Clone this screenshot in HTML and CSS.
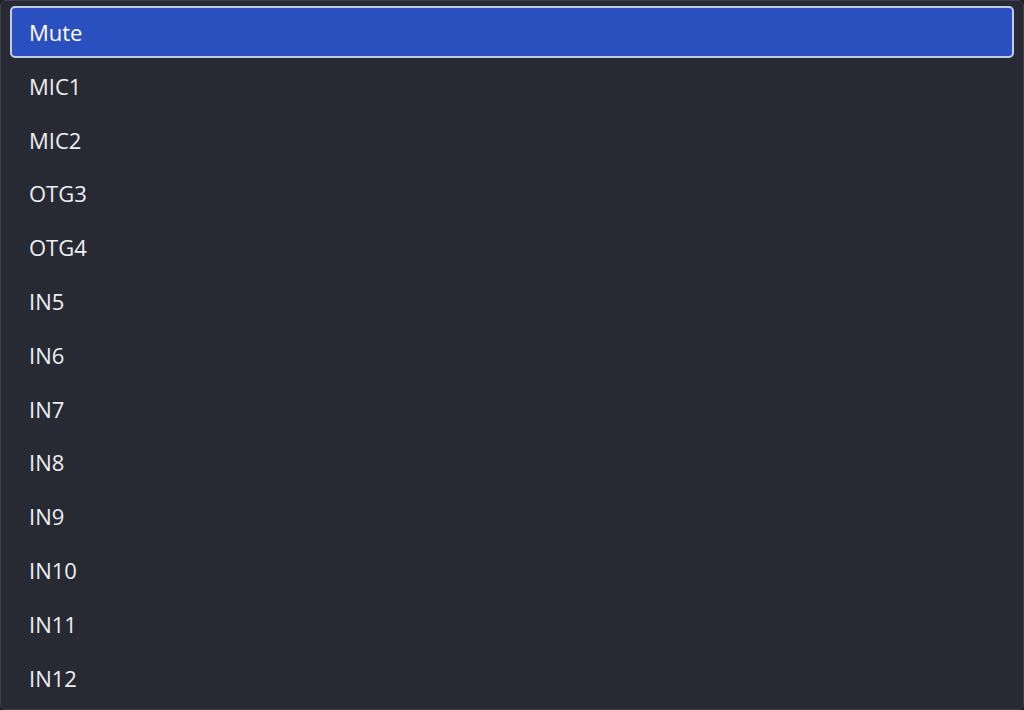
FILE: index.html
```html
<!DOCTYPE html>
<html lang="en">
<head>
  <meta charset="UTF-8" />
  <meta name="viewport" content="width=device-width, initial-scale=1.0"/>
  <title>Input select</title>
  <link rel="stylesheet" href="styles.css">
</head>
<body>
  <div class="dropdown">
    <ul class="option-list">
      <li class="option selected">Mute</li>
      <li class="option">MIC1</li>
      <li class="option">MIC2</li>
      <li class="option">OTG3</li>
      <li class="option">OTG4</li>
      <li class="option">IN5</li>
      <li class="option">IN6</li>
      <li class="option">IN7</li>
      <li class="option">IN8</li>
      <li class="option">IN9</li>
      <li class="option">IN10</li>
      <li class="option">IN11</li>
      <li class="option">IN12</li>
    </ul>
  </div>
</body>
</html>
```

FILE: styles.css
```css
html, body {
  margin: 0;
  height: 100%;
  background: #1c1e24;
  overflow: hidden;
}
body {
  font-family: "Open Sans", "Noto Sans", sans-serif;
}
.dropdown {
  box-sizing: border-box;
  height: 710px;
  background: #272a33;
  border: 1px solid #3d4049;
  border-radius: 6px;
  overflow: hidden;
}
.option-list {
  list-style: none;
  margin: 0;
  padding: 5px 9px 0 9px;
  display: flex;
  flex-direction: column;
  gap: 1.8px;
}
.option {
  box-sizing: border-box;
  height: 52px;
  flex-shrink: 0;
  display: flex;
  align-items: center;
  padding: 0 17px;
  border: 2px solid transparent;
  border-radius: 5px;
  font-size: 22px;
  color: #eeeff3;
}
.option.selected {
  background: #2a4fbf;
  border-color: #c3cce4;
  color: #ffffff;
}
```
